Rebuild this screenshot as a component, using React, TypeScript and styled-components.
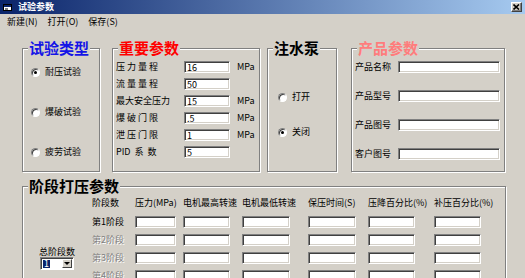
import React from "react";
import styled, { createGlobalStyle, css } from "styled-components";

const FONT = `"Noto Sans CJK SC", "Noto Sans", sans-serif`;

const GlobalStyle = createGlobalStyle`
    html, body {
        margin: 0;
        padding: 0;
        background: #d4d0c8;
    }
    * {
        box-sizing: border-box;
    }
`;

const Window = styled.div`
    width: 525px;
    height: 278px;
    overflow: hidden;
    background: #d4d0c8;
    font-family: ${FONT};
    font-size: 9px;
    color: #000;
`;

const TitleBar = styled.div`
    height: 14px;
    display: flex;
    align-items: center;
    padding: 0 3px;
    background: linear-gradient(to right, #0a246a, #a6caf0);
`;

const TitleText = styled.span`
    margin-left: 5px;
    color: #fff;
    font-weight: bold;
    font-size: 9px;
    line-height: 14px;
`;

const CloseButton = styled.div`
    margin-left: auto;
    width: 11px;
    height: 10px;
    display: flex;
    align-items: center;
    justify-content: center;
    background: #d4d0c8;
    border: 1px solid;
    border-color: #fff #404040 #404040 #fff;
    box-shadow: inset -1px -1px 0 #808080;
`;

const MenuBar = styled.div`
    height: 15px;
    display: flex;
    align-items: center;
    gap: 10px;
    padding-left: 7px;
`;

const MenuItem = styled.span`
    font-size: 9px;
    line-height: 15px;
`;

const Body = styled.div`
    padding: 19px 0 0 22px;
`;

const TopRow = styled.div`
    display: flex;
    align-items: flex-start;
`;

type GroupProps = {
    readonly $w: number;
    readonly $h: number;
    readonly $ml?: number;
    readonly $mt?: number;
    readonly $pad: string;
};

const GroupBox = styled.div<GroupProps>`
    position: relative;
    width: ${(p) => p.$w}px;
    height: ${(p) => p.$h}px;
    margin-left: ${(p) => p.$ml || 0}px;
    margin-top: ${(p) => p.$mt || 0}px;
    padding: ${(p) => p.$pad};
    border: 1px solid #808080;
    box-shadow: 1px 1px 0 #fff, inset 1px 1px 0 #fff;
`;

const Legend = styled.span<{ readonly $color: string }>`
    position: absolute;
    top: -9px;
    left: 5px;
    padding: 0 1px;
    background: #d4d0c8;
    color: ${(p) => p.$color};
    font-size: 15px;
    font-weight: bold;
    line-height: 16px;
    white-space: nowrap;
`;

const RadioList = styled.div<{ readonly $gap: number }>`
    display: flex;
    flex-direction: column;
    gap: ${(p) => p.$gap}px;
`;

const RadioRow = styled.div`
    display: flex;
    align-items: center;
    gap: 5px;
    height: 12px;
    line-height: 12px;
`;

const RadioDot = styled.span<{ readonly $checked?: boolean }>`
    position: relative;
    width: 9px;
    height: 9px;
    border-radius: 50%;
    background: #fff;
    border: 1px solid;
    border-color: #808080 #fff #fff #808080;
    box-shadow: inset 1px 1px 0 #404040;

    ${(p) =>
        p.$checked &&
        css`
            &::after {
                content: "";
                position: absolute;
                left: 2px;
                top: 2px;
                width: 3px;
                height: 3px;
                border-radius: 50%;
                background: #000;
            }
        `};
`;

const ParamRow = styled.div`
    display: grid;
    grid-template-columns: 61px 46px auto;
    column-gap: 7px;
    height: 17px;
    align-items: start;
    line-height: 12px;
`;

const Label = styled.span<{ readonly $spread?: number }>`
    line-height: 12px;
    white-space: pre;
    letter-spacing: ${(p) => p.$spread || 0}px;
`;

const Field = styled.input<{ readonly $w: number }>`
    width: ${(p) => p.$w}px;
    height: 12px;
    margin: 0;
    padding: 0 0 0 2px;
    border: 1px solid;
    border-color: #808080 #fff #fff #808080;
    box-shadow: inset 1px 1px 0 #404040, inset -1px -1px 0 #d4d0c8;
    background: #fff;
    font-family: ${FONT};
    font-size: 9px;
    line-height: 10px;
    color: #000;
    outline: none;
`;

const ProductGrid = styled.div`
    display: grid;
    grid-template-columns: 43px 102px;
    row-gap: 17px;
    align-items: center;
`;

const StageBody = styled.div`
    display: flex;
`;

const TotalCol = styled.div`
    width: 69px;
    padding: 59px 0 0 16px;
    display: flex;
    flex-direction: column;
    gap: 0;
`;

const TotalLabel = styled.span`
    line-height: 11px;
`;

const Combo = styled.div`
    width: 34px;
    height: 13px;
    margin-left: 1px;
    display: flex;
    align-items: center;
    padding: 1px;
    background: #fff;
    border: 1px solid;
    border-color: #808080 #fff #fff #808080;
    box-shadow: inset 1px 1px 0 #404040;
`;

const ComboValue = styled.span`
    margin-left: 1px;
    padding: 0 1px;
    height: 8px;
    line-height: 8px;
    background: #0a246a;
    color: #fff;
    font-size: 9px;
`;

const ComboButton = styled.span`
    margin-left: auto;
    width: 10px;
    height: 9px;
    display: flex;
    align-items: center;
    justify-content: center;
    background: #d4d0c8;
    border: 1px solid;
    border-color: #fff #404040 #404040 #fff;

    &::after {
        content: "";
        border-left: 3px solid transparent;
        border-right: 3px solid transparent;
        border-top: 3px solid #000;
    }
`;

const StageGrid = styled.div`
    display: grid;
    grid-template-columns: 43px 48px 59px 66px 60px 66px 47px;
    grid-template-rows: 20px;
    grid-auto-rows: 18px;
    align-items: start;
    padding-top: 9px;
`;

const HeadCell = styled.span`
    line-height: 14px;
    white-space: nowrap;
`;

const StageLabel = styled.span<{ readonly $disabled?: boolean }>`
    line-height: 12px;
    white-space: nowrap;
    color: ${(p) => (p.$disabled ? "#808080" : "#000")};
    text-shadow: ${(p) => (p.$disabled ? "1px 1px 0 #fff" : "none")};
`;

const params = [
    { label: "压力量程", spread: 2, value: "16", unit: "MPa" },
    { label: "流量量程", spread: 2, value: "50", unit: "" },
    { label: "最大安全压力", spread: 0, value: "15", unit: "MPa" },
    { label: "爆破门限", spread: 2, value: ".5", unit: "MPa" },
    { label: "泄压门限", spread: 2, value: "1", unit: "MPa" },
    { label: "PID  系  数", spread: 0, value: "5", unit: "" },
];

const products = ["产品名称", "产品型号", "产品图号", "客户图号"];

const heads = ["阶段数", "压力(MPa)", "电机最高转速", "电机最低转速", "保压时间(S)", "压降百分比(%)", "补压百分比(%)"];
const fieldWidths = [41, 47, 48, 48, 47, 47];
const stages = ["第1阶段", "第2阶段", "第3阶段", "第4阶段"];

const AppIcon = () => (
    <svg width="10" height="9" viewBox="0 0 10 9">
        <rect x="0.5" y="1.5" width="8" height="6" fill="#fff" stroke="#000" />
        <rect x="1" y="2" width="7" height="2" fill="#0a246a" />
        <path d="M2 6h3" stroke="#000" />
    </svg>
);

const App = function () {
    return (
        <>
            <GlobalStyle />
            <Window>
                <TitleBar>
                    <AppIcon />
                    <TitleText>试验参数</TitleText>
                    <CloseButton>
                        <svg width="7" height="6" viewBox="0 0 7 6">
                            <path d="M0.5 0.5L6 5.5M6 0.5L0.5 5.5" stroke="#000" strokeWidth="1.6" />
                        </svg>
                    </CloseButton>
                </TitleBar>
                <MenuBar>
                    <MenuItem>新建(N)</MenuItem>
                    <MenuItem>打开(O)</MenuItem>
                    <MenuItem>保存(S)</MenuItem>
                </MenuBar>
                <Body>
                    <TopRow>
                        <GroupBox $w={78} $h={124} $pad="17px 0 0 8px">
                            <Legend $color="#1414e6">试验类型</Legend>
                            <RadioList $gap={28}>
                                <RadioRow>
                                    <RadioDot $checked />
                                    耐压试验
                                </RadioRow>
                                <RadioRow>
                                    <RadioDot />
                                    爆破试验
                                </RadioRow>
                                <RadioRow>
                                    <RadioDot />
                                    疲劳试验
                                </RadioRow>
                            </RadioList>
                        </GroupBox>
                        <GroupBox $w={148} $h={124} $ml={12} $pad="12px 0 0 3px">
                            <Legend $color="#f00">重要参数</Legend>
                            {params.map((p) => (
                                <ParamRow key={p.label}>
                                    <Label $spread={p.spread}>{p.label}</Label>
                                    <Field $w={46} defaultValue={p.value} readOnly />
                                    <span>{p.unit}</span>
                                </ParamRow>
                            ))}
                        </GroupBox>
                        <GroupBox $w={70} $h={124} $ml={7} $pad="42px 0 0 10px">
                            <Legend $color="#000">注水泵</Legend>
                            <RadioList $gap={23}>
                                <RadioRow>
                                    <RadioDot />
                                    打开
                                </RadioRow>
                                <RadioRow>
                                    <RadioDot $checked />
                                    关闭
                                </RadioRow>
                            </RadioList>
                        </GroupBox>
                        <GroupBox $w={154} $h={124} $ml={14} $pad="12px 0 0 3px">
                            <Legend $color="#ff7c7c">产品参数</Legend>
                            <ProductGrid>
                                {products.map((name) => (
                                    <React.Fragment key={name}>
                                        <Label>{name}</Label>
                                        <Field $w={102} readOnly />
                                    </React.Fragment>
                                ))}
                            </ProductGrid>
                        </GroupBox>
                    </TopRow>
                    <GroupBox $w={484} $h={120} $mt={14} $pad="0">
                        <Legend $color="#000">阶段打压参数</Legend>
                        <StageBody>
                            <TotalCol>
                                <TotalLabel>总阶段数</TotalLabel>
                                <Combo>
                                    <ComboValue>1</ComboValue>
                                    <ComboButton />
                                </Combo>
                            </TotalCol>
                            <StageGrid>
                                {heads.map((h) => (
                                    <HeadCell key={h}>{h}</HeadCell>
                                ))}
                                {stages.map((s, i) => (
                                    <React.Fragment key={s}>
                                        <StageLabel $disabled={i > 0}>{s}</StageLabel>
                                        {fieldWidths.map((w, j) => (
                                            <Field key={j} $w={w} readOnly />
                                        ))}
                                    </React.Fragment>
                                ))}
                            </StageGrid>
                        </StageBody>
                    </GroupBox>
                </Body>
            </Window>
        </>
    );
};

export default App;
